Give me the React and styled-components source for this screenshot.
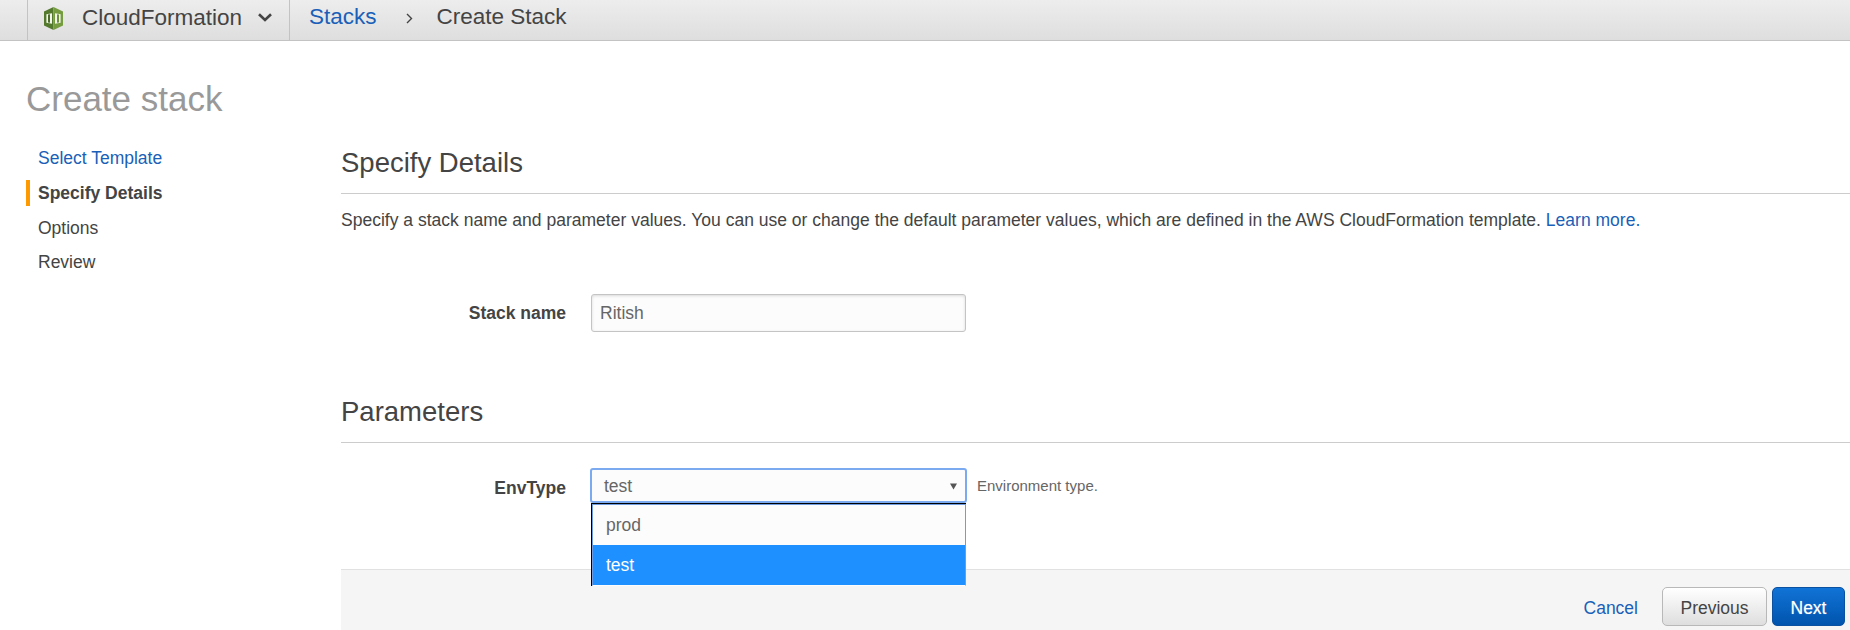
import React from "react";
import styled, { createGlobalStyle } from "styled-components";

const GlobalStyle = createGlobalStyle`
  * { box-sizing: border-box; }
  body {
    margin: 0;
    background: #fff;
    color: #444;
    font-family: "Liberation Sans", Arial, sans-serif;
    font-size: 17.5px;
    line-height: 26px;
    overflow: hidden;
  }
`;

const Page = styled.div`
  height: 630px;
  display: flex;
  flex-direction: column;
  overflow: hidden;
`;

const NavBar = styled.header`
  height: 41px;
  flex: none;
  display: flex;
  padding-left: 27px;
  border-bottom: 1px solid #c3c3c3;
  background: linear-gradient(#ededed, #dedede);
  font-size: 22.5px;
  line-height: 35px;
  white-space: nowrap;
`;

const Service = styled.div`
  width: 263px;
  display: flex;
  align-items: flex-start;
  border-left: 1px solid #c3c3c3;
  border-right: 1px solid #c3c3c3;
  padding-left: 16px;
`;

const ServiceLogo = styled.svg`
  margin-top: 7px;
  margin-right: 19px;
`;

const ServiceName = styled.span`
  width: 159px;
  margin-right: 17px;
`;

const Chevron = styled.svg`
  margin-top: 13px;
`;

const Breadcrumbs = styled.nav`
  display: flex;
  padding-left: 19px;
  line-height: 34px;
`;

const Link = styled.a`
  color: #1a5fb8;
  text-decoration: none;
`;

const CrumbArrow = styled.svg`
  margin: 13px 24px 0 29px;
`;

const Title = styled.h1`
  margin: 38px 0 0 26px;
  font-size: 35px;
  line-height: 40px;
  font-weight: 400;
  color: #999;
`;

const Columns = styled.div`
  flex: 1;
  display: flex;
  padding-left: 26px;
`;

const Steps = styled.nav`
  width: 315px;
  flex: none;
  display: flex;
  flex-direction: column;
  gap: 8.75px;
  padding-top: 26px;
`;

const Step = styled.div`
  height: 26px;
  border-left: 4px solid ${(p) => (p.$active ? "#f90" : "transparent")};
  padding-left: 8px;
  font-weight: ${(p) => (p.$active ? 700 : 400)};
`;

const Main = styled.main`
  flex: 1;
  display: flex;
  flex-direction: column;
  padding-top: 28px;
`;

const SectionHeading = styled.h2`
  margin: 0;
  height: 47px;
  border-bottom: 1px solid #ccc;
  font-size: 27.5px;
  line-height: 32px;
  font-weight: 400;
`;

const Intro = styled.p`
  margin: 13px 0 61px;
  letter-spacing: 0.008px;
  white-space: nowrap;
`;

const Field = styled.div`
  display: flex;
  align-items: flex-start;
  margin-top: ${(p) => p.$before || 0}px;
  margin-bottom: ${(p) => p.$after || 0}px;
`;

const Label = styled.label`
  width: 225px;
  padding-top: ${(p) => p.$top}px;
  margin-right: ${(p) => p.$gap}px;
  text-align: right;
  font-weight: 700;
`;

const TextInput = styled.input`
  width: 375px;
  height: 38px;
  padding: 0 8px;
  border: 1px solid #c4c4c4;
  border-radius: 3px;
  background: #fcfcfc;
  box-shadow: inset 0 1px 3px rgba(0, 0, 0, 0.14);
  color: #666;
  font: inherit;
  outline: none;
`;

const Select = styled.div`
  position: relative;
  width: 377px;
  height: 35px;
  display: flex;
  justify-content: space-between;
  padding: 3px 8px 0 12px;
  border: 2px solid #7baaf0;
  border-radius: 3px;
  background: #fcfcfc;
  color: #666;
`;

const Caret = styled.svg`
  margin-top: 10px;
`;

const Menu = styled.div`
  position: absolute;
  z-index: 1;
  top: 33px;
  left: -1px;
  width: 375px;
  height: 83px;
  border-top: 1px solid #000;
  border-left: 1px solid #000;
  background: #fcfcfc;
`;

const MenuInner = styled.div`
  height: 82px;
  border: 1px solid #6f9be0;
  border-bottom-color: #fcfcfc;
`;

const Option = styled.div`
  height: 40px;
  padding-left: 13px;
  line-height: 40px;
  color: ${(p) => (p.$selected ? "#fff" : "#666")};
  background: ${(p) => (p.$selected ? "#1e90ff" : "#fcfcfc")};
`;

const Hint = styled.span`
  margin-left: 10px;
  padding-top: 5px;
  font-size: 15px;
  color: #666;
`;

const Footer = styled.footer`
  height: 61px;
  display: flex;
  justify-content: flex-end;
  align-items: flex-start;
  padding: 17px 5px 0 0;
  border-top: 1px solid #e1e1e1;
  background: #f5f5f5;
`;

const CancelLink = styled(Link)`
  padding-top: 8px;
  margin-right: 24px;
`;

const Button = styled.button`
  width: ${(p) => (p.$primary ? 73 : 105)}px;
  height: 39px;
  margin-left: ${(p) => (p.$primary ? 5 : 0)}px;
  padding: 2px 0 0;
  border: 1px solid ${(p) => (p.$primary ? "#0a51a1" : "#b8b8b8")};
  border-radius: 5px;
  background: ${(p) =>
    p.$primary
      ? "linear-gradient(#1173d6, #0054ad)"
      : "linear-gradient(#fff, #dedede)"};
  color: ${(p) => (p.$primary ? "#fff" : "#444")};
  text-shadow: ${(p) => (p.$primary ? "0 0 1px rgba(255,255,255,.5)" : "none")};
  font: inherit;
`;

export default function App() {
  return (
    <Page>
      <GlobalStyle />
      <NavBar>
        <Service>
          <ServiceLogo width="19" height="23" viewBox="0 0 19 23">
            <path d="M0 4.5 9.5 0v23L0 18.5z" fill="#537a2c" />
            <path d="M9.5 0 19 4.5v14L9.5 23z" fill="#759c3e" />
            <path d="M2.4 7.2 8 6.2v10.6l-5.6-1z" fill="#f2f5ee" />
            <path d="M4 7.6l2-.3v8.4l-2-.3z" fill="#4b6c2a" />
            <path d="M11 6.2l5.6 1v8.6l-5.6 1z" fill="#f2f5ee" />
            <path d="M13 7.3l2 .3v7.8l-2 .3z" fill="#6b9138" />
          </ServiceLogo>
          <ServiceName>CloudFormation</ServiceName>
          <Chevron width="14" height="9" viewBox="0 0 14 9" fill="none">
            <path d="M1 1.2 7 7 13 1.2" stroke="#444" strokeWidth="2.6" />
          </Chevron>
        </Service>
        <Breadcrumbs>
          <Link>Stacks</Link>
          <CrumbArrow width="7" height="11" viewBox="0 0 7 11" fill="none">
            <path d="M1 1 5.5 5.5 1 10" stroke="#444" strokeWidth="1.4" />
          </CrumbArrow>
          <span>Create Stack</span>
        </Breadcrumbs>
      </NavBar>
      <Title>Create stack</Title>
      <Columns>
        <Steps>
          <Step><Link>Select Template</Link></Step>
          <Step $active>Specify Details</Step>
          <Step>Options</Step>
          <Step>Review</Step>
        </Steps>
        <Main>
          <SectionHeading>Specify Details</SectionHeading>
          <Intro>
            Specify a stack name and parameter values. You can use or change the
            default parameter values, which are defined in the AWS
            CloudFormation template. <Link>Learn more.</Link>
          </Intro>
          <Field $after={64}>
            <Label $gap={25} $top={6}>Stack name</Label>
            <TextInput defaultValue="Ritish" />
          </Field>
          <SectionHeading>Parameters</SectionHeading>
          <Field $before={25} $after={66}>
            <Label $gap={24} $top={7}>EnvType</Label>
            <Select>
              test
              <Caret width="7" height="7" viewBox="0 0 8 7">
                <path d="M0 0h8L4 7z" fill="#555" />
              </Caret>
              <Menu>
                <MenuInner>
                  <Option>prod</Option>
                  <Option $selected>test</Option>
                </MenuInner>
              </Menu>
            </Select>
            <Hint>Environment type.</Hint>
          </Field>
          <Footer>
            <CancelLink>Cancel</CancelLink>
            <Button>Previous</Button>
            <Button $primary>Next</Button>
          </Footer>
        </Main>
      </Columns>
    </Page>
  );
}
